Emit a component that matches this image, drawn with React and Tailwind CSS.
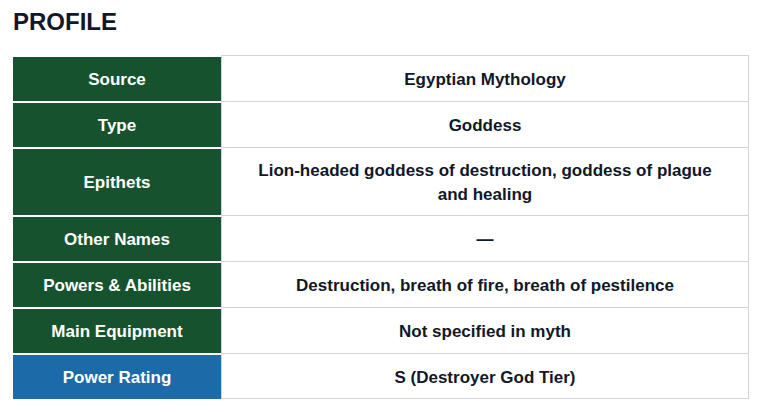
const rows = [
  { label: "Source", value: "Egyptian Mythology" },
  { label: "Type", value: "Goddess" },
  {
    label: "Epithets",
    value: "Lion-headed goddess of destruction, goddess of plague and healing",
    tall: true,
  },
  { label: "Other Names", value: "—" },
  { label: "Powers & Abilities", value: "Destruction, breath of fire, breath of pestilence" },
  { label: "Main Equipment", value: "Not specified in myth" },
  { label: "Power Rating", value: "S (Destroyer God Tier)", highlight: true },
];

const App = () => {
  return (
    <div
      className="min-h-screen bg-white px-[13px] pt-[6px]"
      style={{ fontFamily: '"Liberation Sans", Arial, sans-serif' }}
    >
      <h2 className="text-2xl leading-8 font-bold text-[#111827]">PROFILE</h2>

      {/* Profile table */}
      <div className="mt-[17px] w-[736px] flex flex-col">
        {rows.map((row, i) => (
          <div
            key={row.label}
            className={`flex ${row.tall ? "h-[68px]" : "h-[46px]"}`}
          >
            <div
              className={`w-[208px] shrink-0 border-t-2 border-white flex items-center justify-center pt-[2px] text-[17px] font-bold text-white ${
                row.highlight ? "bg-[#1d6aa9]" : "bg-[#17522f]"
              }`}
            >
              {row.label}
            </div>
            <div
              className={`flex-1 border-l border-r border-t border-[#d1d5db] flex items-center justify-center px-[24px] pt-[3px] text-center text-[17px] leading-6 font-bold text-[#111827] ${
                i === rows.length - 1 ? "border-b" : ""
              }`}
            >
              {row.value}
            </div>
          </div>
        ))}
      </div>
    </div>
  );
};

export default App;
